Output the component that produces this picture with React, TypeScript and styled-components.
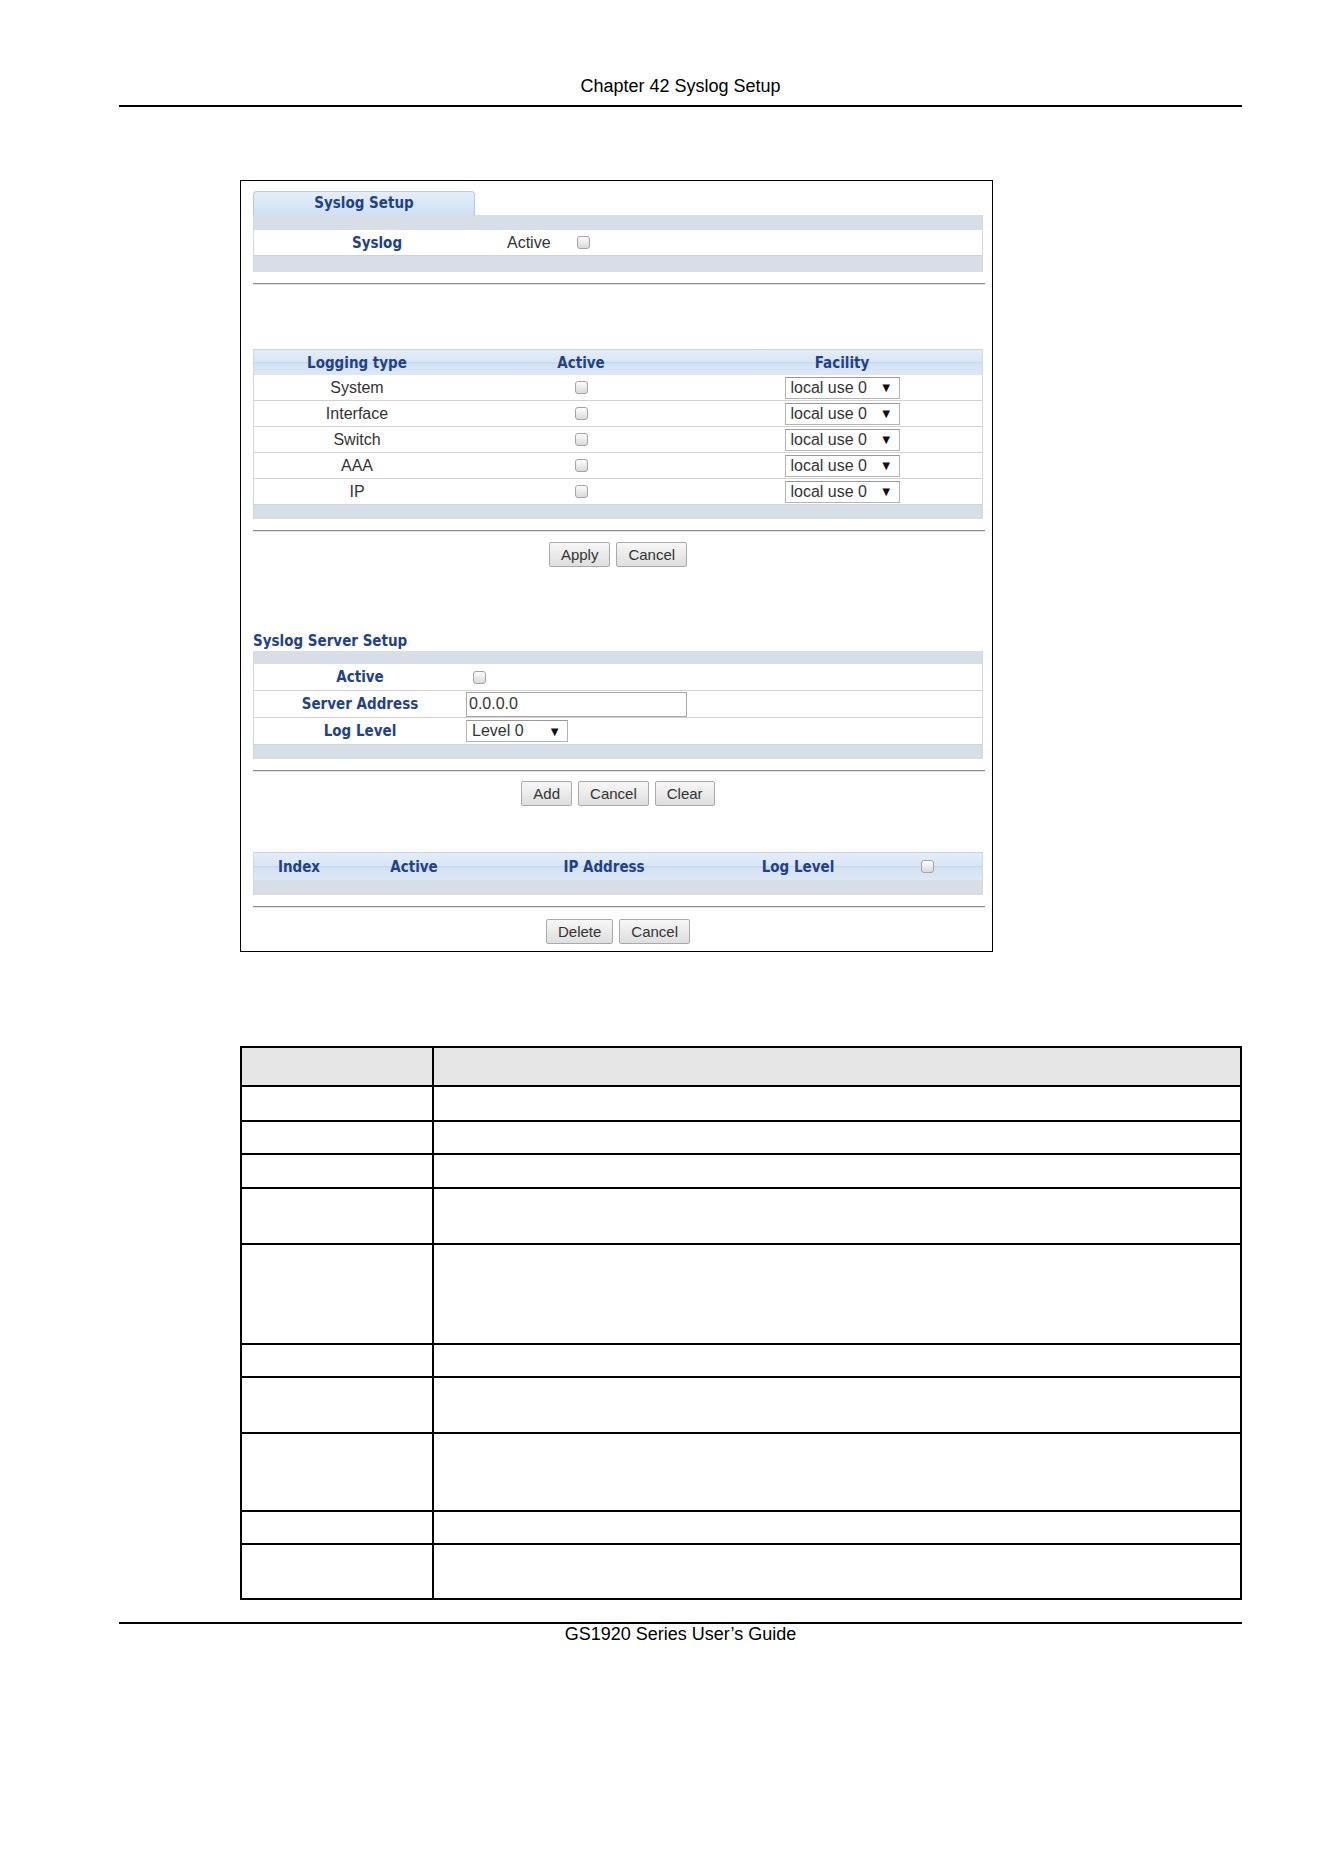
import React from "react";
import styled, { createGlobalStyle } from "styled-components";

const GlobalStyle = createGlobalStyle`
  body {
    margin: 0;
    background: #fff;
    font-family: "Liberation Sans", Arial, sans-serif;
  }
`;

const Page = styled.div`
  width: 1324px;
  padding-top: 75px;
  display: flex;
  flex-direction: column;
`;

const RunningHead = styled.div`
  margin-left: 119px;
  width: 1123px;
  text-align: center;
  font-size: 18px;
  line-height: 22px;
  color: #000;
  padding-bottom: 8px;
  border-bottom: 2px solid #000;
`;

const RunningFoot = styled(RunningHead)`
  margin-top: 22px;
  padding: 0;
  line-height: 20px;
  border-bottom: none;
  border-top: 2px solid #000;
`;

const Frame = styled.div`
  margin: 73px 0 0 240px;
  width: 753px;
  box-sizing: border-box;
  border: 1px solid #000;
  padding: 10px 9px 7px 12px;
  display: flex;
  flex-direction: column;
`;

const heading = `
  font-family: "DejaVu Sans Condensed", "DejaVu Sans", Verdana, sans-serif;
  font-stretch: condensed;
  font-weight: bold;
  font-size: 15px;
  color: #1f4288;
`;

const Tab = styled.div`
  ${heading}
  width: 222px;
  height: 24px;
  box-sizing: border-box;
  border: 1px solid #b9c9dc;
  border-bottom: none;
  border-radius: 4px 4px 0 0;
  background: linear-gradient(#e6eefa, #cfe0f4);
  text-align: center;
  line-height: 23px;
`;

const Panel = styled.div`
  width: 730px;
  box-sizing: border-box;
  border-left: 1px solid #d3d8df;
  border-right: 1px solid #d3d8df;
  display: flex;
  flex-direction: column;
`;

const Band = styled.div<{ $h: number }>`
  height: ${(p) => p.$h}px;
  background: #d8dee7;
`;

const Row = styled.div<{ $cols: string; $h: number }>`
  display: grid;
  grid-template-columns: ${(p) => p.$cols};
  height: ${(p) => p.$h}px;
  align-items: center;
  background: #fff;
  border-bottom: 1px solid #d2d2d2;
  box-sizing: border-box;
  &:last-of-type {
    border-bottom: none;
  }
`;

const HeadRow = styled.div<{ $cols: string; $h: number }>`
  display: grid;
  grid-template-columns: ${(p) => p.$cols};
  height: ${(p) => p.$h}px;
  align-items: center;
  border-top: 1px solid #c7d5e6;
  box-sizing: border-box;
  background: linear-gradient(
    #e4edf9 0%,
    #d9e5f5 48%,
    #c6d8ef 50%,
    #d3e2f4 56%,
    #dde8f7 100%
  );
`;

const HeadCell = styled.div<{ $align?: string }>`
  ${heading}
  text-align: ${(p) => p.$align || "center"};
`;

const Cell = styled.div<{ $align?: string; $pad?: number }>`
  font-size: 16px;
  color: #333;
  text-align: ${(p) => p.$align || "center"};
  padding-left: ${(p) => p.$pad || 0}px;
  display: flex;
  align-items: center;
  justify-content: ${(p) => (p.$align === "left" ? "flex-start" : "center")};
`;

const Check = styled.input`
  appearance: none;
  width: 13px;
  height: 13px;
  margin: 0;
  border: 1px solid #a4a4a4;
  border-radius: 3px;
  background: linear-gradient(#fdfdfd, #d9d9d9);
  box-sizing: border-box;
`;

const Dropdown = styled.div<{ $w: number }>`
  width: ${(p) => p.$w}px;
  height: 22px;
  box-sizing: border-box;
  border: 1px solid #b4b4b4;
  border-top-color: #9a9a9a;
  background: #fff;
  display: flex;
  align-items: center;
  justify-content: space-between;
  padding: 0 6px 0 5px;
  font-size: 16px;
  color: #333;
  span:last-child {
    font-size: 13px;
    color: #111;
  }
`;

const TextField = styled.input`
  width: 221px;
  height: 25px;
  box-sizing: border-box;
  margin: 0;
  border: 1px solid #a8a8a8;
  padding: 0 2px;
  font-family: "Liberation Sans", Arial, sans-serif;
  font-size: 16px;
  color: #333;
`;

const Rule = styled.div<{ $top: number }>`
  margin-top: ${(p) => p.$top}px;
  width: 732px;
  height: 2px;
  box-sizing: border-box;
  border-top: 1px solid #8c8c8c;
  border-bottom: 1px solid #e2e2e2;
`;

const Buttons = styled.div<{ $top: number }>`
  margin-top: ${(p) => p.$top}px;
  width: 730px;
  display: flex;
  justify-content: center;
  gap: 6px;
`;

const Button = styled.button`
  height: 25px;
  padding: 0 11px;
  border: 1px solid #a9a9a9;
  border-radius: 2px;
  background: linear-gradient(#f7f7f7, #dedede);
  font-family: "Liberation Sans", Arial, sans-serif;
  font-size: 15px;
  color: #333;
`;

const SectionTitle = styled.div`
  ${heading}
  margin-top: 65px;
  line-height: 18px;
  margin-bottom: 1px;
`;

const Spacer = styled.div<{ $h: number }>`
  height: ${(p) => p.$h}px;
`;

const FieldTable = styled.div`
  margin: 94px 0 0 240px;
  width: 1002px;
  box-sizing: border-box;
  border: 2px solid #000;
  border-bottom-width: 0;
  display: flex;
  flex-direction: column;
`;

const FieldRow = styled.div<{ $h: number; $head?: boolean }>`
  display: grid;
  grid-template-columns: 192px 1fr;
  height: ${(p) => p.$h}px;
  box-sizing: border-box;
  border-bottom: 2px solid #000;
  background: ${(p) => (p.$head ? "#e6e6e6" : "#fff")};
  & > div:first-child {
    border-right: 2px solid #000;
  }
`;

const loggingCols = "206px 242px 280px";
const serverCols = "212px 1fr";
const indexCols = "90px 140px 240px 148px 110px";

const logTypes = ["System", "Interface", "Switch", "AAA", "IP"];
const fieldRows = [39, 35, 33, 34, 56, 100, 33, 56, 78, 33, 55];

export default function App() {
  return (
    <Page>
      <GlobalStyle />
      <RunningHead>Chapter 42 Syslog Setup</RunningHead>

      <Frame>
        <Tab>Syslog Setup</Tab>
        <Panel>
          <Band $h={15} />
          <Row $cols="246px 1fr" $h={26}>
            <HeadCell>Syslog</HeadCell>
            <Cell $align="left" $pad={7}>
              Active
              <Check type="checkbox" readOnly style={{ marginLeft: 26 }} />
            </Cell>
          </Row>
          <Band $h={16} />
        </Panel>
        <Rule $top={11} />

        <Spacer $h={64} />
        <Panel>
          <HeadRow $cols={loggingCols} $h={26}>
            <HeadCell>Logging type</HeadCell>
            <HeadCell>Active</HeadCell>
            <HeadCell>Facility</HeadCell>
          </HeadRow>
          {logTypes.map((t) => (
            <Row key={t} $cols={loggingCols} $h={26}>
              <Cell>{t}</Cell>
              <Cell>
                <Check type="checkbox" readOnly />
              </Cell>
              <Cell>
                <Dropdown $w={115}>
                  <span>local use 0</span>
                  <span>▼</span>
                </Dropdown>
              </Cell>
            </Row>
          ))}
          <Band $h={14} />
        </Panel>
        <Rule $top={11} />
        <Buttons $top={10}>
          <Button>Apply</Button>
          <Button>Cancel</Button>
        </Buttons>

        <SectionTitle>Syslog Server Setup</SectionTitle>
        <Panel>
          <Band $h={13} />
          <Row $cols={serverCols} $h={27}>
            <HeadCell>Active</HeadCell>
            <Cell $align="left" $pad={7}>
              <Check type="checkbox" readOnly />
            </Cell>
          </Row>
          <Row $cols={serverCols} $h={27}>
            <HeadCell>Server Address</HeadCell>
            <Cell $align="left">
              <TextField defaultValue="0.0.0.0" />
            </Cell>
          </Row>
          <Row $cols={serverCols} $h={27}>
            <HeadCell>Log Level</HeadCell>
            <Cell $align="left">
              <Dropdown $w={102}>
                <span>Level 0</span>
                <span>▼</span>
              </Dropdown>
            </Cell>
          </Row>
          <Band $h={14} />
        </Panel>
        <Rule $top={11} />
        <Buttons $top={9}>
          <Button>Add</Button>
          <Button>Cancel</Button>
          <Button>Clear</Button>
        </Buttons>

        <Spacer $h={46} />
        <Panel>
          <HeadRow $cols={indexCols} $h={28}>
            <HeadCell>Index</HeadCell>
            <HeadCell>Active</HeadCell>
            <HeadCell>IP Address</HeadCell>
            <HeadCell>Log Level</HeadCell>
            <Cell>
              <Check type="checkbox" readOnly />
            </Cell>
          </HeadRow>
          <Band $h={15} />
        </Panel>
        <Rule $top={11} />
        <Buttons $top={11}>
          <Button>Delete</Button>
          <Button>Cancel</Button>
        </Buttons>
      </Frame>

      <FieldTable>
        {fieldRows.map((h, i) => (
          <FieldRow key={i} $h={h} $head={i === 0}>
            <div />
            <div />
          </FieldRow>
        ))}
      </FieldTable>

      <RunningFoot>GS1920 Series User’s Guide</RunningFoot>
    </Page>
  );
}
